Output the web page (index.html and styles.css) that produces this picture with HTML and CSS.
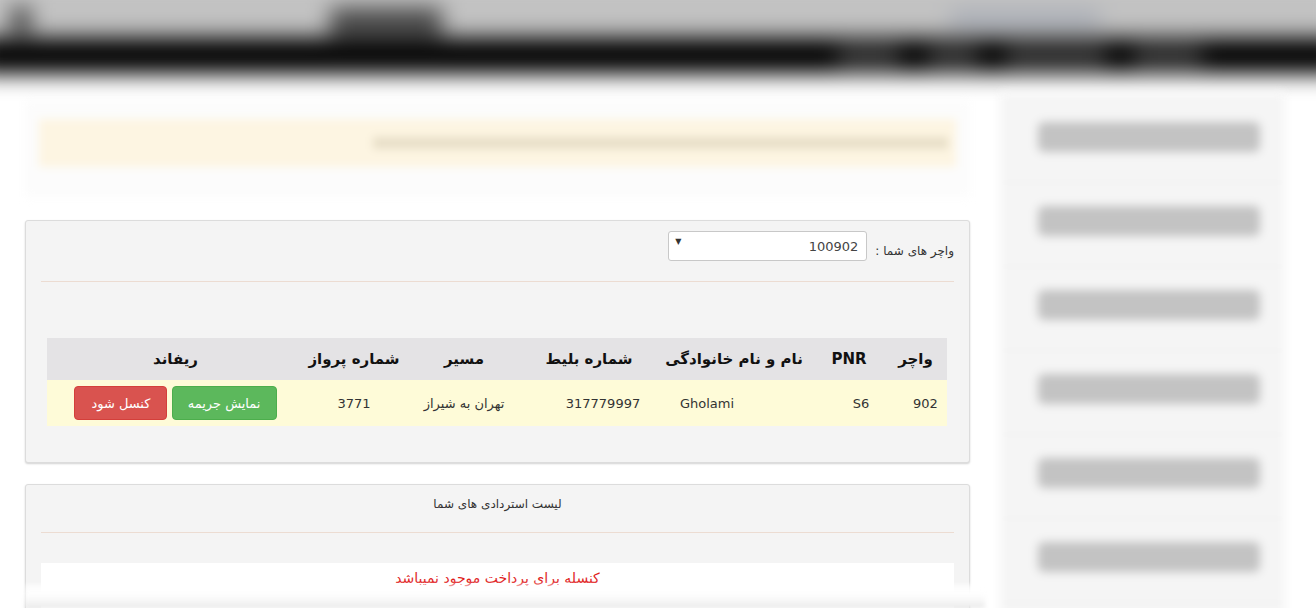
FILE: index.html
```
<!doctype html>
<html lang="fa" dir="rtl">
	<head>
		<meta charset="utf-8">
		<title>واچر های شما</title>
		<link rel="stylesheet" href="styles.css">
	</head>

	<body>
		<div class="masthead">
			<div class="topbar">
				<span class="top-links"></span>
				<span class="logo"></span>
				<span class="menu-icon"></span>
			</div>
			<div class="navbar">
				<span class="nav-item w70"></span>
				<span class="nav-item w100"></span>
				<span class="nav-item w50"></span>
				<span class="nav-item w62"></span>
			</div>
		</div>

		<div class="page">
			<div class="sidebar">
				<div class="side-item"><span class="side-bar"></span></div>
				<div class="side-item"><span class="side-bar"></span></div>
				<div class="side-item"><span class="side-bar"></span></div>
				<div class="side-item"><span class="side-bar"></span></div>
				<div class="side-item"><span class="side-bar"></span></div>
				<div class="side-item"><span class="side-bar"></span></div>
			</div>

			<div class="content">
				<div class="notice-wrap">
					<div class="notice"><span class="notice-text"></span></div>
				</div>

				<div class="panel voucher-panel">
					<div class="voucher-select">
						<label for="voucher">واچر های شما :</label>
						<div class="select-box" id="voucher">
							<span class="select-value">100902</span>
							<span class="select-arrow">▼</span>
						</div>
					</div>
					<hr>
					<div class="table-wrap">
						<table class="ticket-table">
							<thead>
								<tr>
									<th class="c-voucher">واچر</th>
									<th class="c-pnr">PNR</th>
									<th class="c-name">نام و نام خانوادگی</th>
									<th class="c-ticket">شماره بلیط</th>
									<th class="c-route">مسیر</th>
									<th class="c-flight">شماره پرواز</th>
									<th class="c-refund">ریفاند</th>
								</tr>
							</thead>
							<tbody>
								<tr>
									<td class="c-voucher">902</td>
									<td class="c-pnr">S6</td>
									<td class="c-name">Gholami</td>
									<td class="c-ticket">317779997</td>
									<td class="c-route">تهران به شیراز</td>
									<td class="c-flight">3771</td>
									<td class="c-refund">
										<span class="btn btn-green">نمایش جریمه</span>
										<span class="btn btn-red">کنسل شود</span>
									</td>
								</tr>
							</tbody>
						</table>
					</div>
				</div>

				<div class="panel refund-panel">
					<div class="refund-title">لیست استردادی های شما</div>
					<hr>
					<div class="refund-box">
						<span class="refund-empty">کنسله برای پرداخت موجود نمیباشد</span>
					</div>
				</div>
			</div>
		</div>

		<div class="bottom-fade"></div>
	</body>
</html>
```

FILE: styles.css
```
html, body {
	margin: 0;
	padding: 0;
	height: 100%;
	overflow: hidden;
}
body {
	background: #fff;
	color: #333;
	font-family: "DejaVu Sans", sans-serif;
	font-size: 13px;
}

/* header, blurred */
.masthead {
	filter: blur(11px);
	margin-top: -24px;
	margin-left: -24px;
	margin-right: -24px;
}
.topbar {
	height: 62px;
	background: #c2c2c2;
	position: relative;
	direction: ltr;
}
.menu-icon, .logo, .top-links {
	position: absolute;
}
.menu-icon {
	left: 36px;
	top: 32px;
	width: 18px;
	height: 24px;
	background: #333;
}
.logo {
	left: 354px;
	top: 32px;
	width: 112px;
	height: 34px;
	background: #4a4a4a;
}
.top-links {
	left: 974px;
	top: 36px;
	width: 150px;
	height: 14px;
	background: #a2a8b4;
}
.navbar {
	height: 36px;
	background: #000;
	display: flex;
	align-items: center;
	direction: ltr;
	padding-left: 862px;
	gap: 28px;
}
.nav-item {
	height: 20px;
	background: #383838;
}
.w70 { width: 62px; }
.w100 { width: 50px; }
.w50 { width: 100px; }
.w62 { width: 68px; }

/* layout */
.page {
	display: flex;
	gap: 30px;
	padding: 0 31px 0 25px;
	margin-top: 19px;
}
.content {
	width: 945px;
	flex: none;
}
.sidebar {
	width: 285px;
	flex: none;
	background: #f5f5f5;
	filter: blur(5px);
	padding-top: 6px;
	height: 540px;
}
.side-item {
	height: 84px;
	display: flex;
	align-items: flex-start;
	justify-content: center;
	border-bottom: 1px solid #ededed;
	box-sizing: border-box;
}
.side-bar {
	display: block;
	width: 222px;
	height: 30px;
	margin-top: 23px;
	margin-left: 12px;
	background: #c3c3c3;
	border-radius: 6px;
}

/* notice */
.notice-wrap {
	margin-top: 8px;
	height: 96px;
	padding: 18px 14px 0;
	background: #fcfcfc;
	filter: blur(4px);
	box-sizing: border-box;
}
.notice {
	height: 48px;
	background: #fdf5e2;
	display: flex;
	align-items: center;
	padding-right: 8px;
}
.notice-text {
	display: block;
	width: 575px;
	height: 12px;
	background: #e8dfc8;
}

/* panels */
.panel {
	background: #f4f4f4;
	border: 1px solid #dcdcdc;
	border-radius: 3px;
	box-shadow: 0 1px 2px rgba(0, 0, 0, 0.18);
	padding: 10px 15px;
}
.panel hr {
	border: 0;
	border-top: 1px solid #ecdcd2;
	margin: 0;
}
.voucher-panel {
	margin-top: 23px;
	height: 243px;
	box-sizing: border-box;
}
.voucher-select {
	display: flex;
	align-items: center;
	gap: 8px;
	height: 30px;
	margin-bottom: 20px;
}
.voucher-select label {
	font-size: 12px;
	color: #333;
	padding-top: 9px;
}
.select-box {
	width: 199px;
	height: 30px;
	box-sizing: border-box;
	background: #fff;
	border: 1px solid #c8c8c8;
	border-radius: 3px;
	display: flex;
	align-items: center;
	justify-content: space-between;
	padding: 0 8px 0 6px;
}
.select-value {
	font-size: 13px;
	color: #444;
}
.select-arrow {
	font-size: 8px;
	color: #333;
	margin-top: -10px;
}

.table-wrap {
	padding: 56px 7px 0 8px;
}
.ticket-table {
	width: 900px;
	border-collapse: collapse;
	table-layout: fixed;
}
.ticket-table th {
	background: #e4e3e5;
	height: 42px;
	font-size: 15px;
	font-weight: bold;
	color: #111;
	text-align: center;
	padding: 0;
}
.ticket-table td {
	background: #fefbd8;
	height: 46px;
	font-size: 13px;
	color: #333;
	text-align: center;
	padding: 0;
}
.c-voucher { width: 63px; }
.c-pnr { width: 70px; }
.c-name { width: 160px; }
.c-ticket { width: 130px; }
.c-route { width: 120px; }
.c-flight { width: 100px; }
.ticket-table td.c-voucher { padding-left: 20px; }
.ticket-table td.c-pnr { padding-left: 24px; }
.ticket-table td.c-name { padding-right: 54px; }
.ticket-table td.c-ticket { padding-left: 28px; }

.btn {
	display: inline-block;
	height: 34px;
	line-height: 33px;
	box-sizing: border-box;
	border-radius: 4px;
	color: #fff;
	font-size: 13px;
	vertical-align: middle;
}
.btn-green {
	width: 105px;
	background: #5cb85c;
	border: 1px solid #4cae4c;
}
.btn-red {
	width: 93px;
	background: #d9534f;
	border: 1px solid #d43f3a;
}

.refund-panel {
	margin-top: 21px;
	height: 200px;
	box-sizing: border-box;
}
.refund-title {
	text-align: center;
	font-size: 12px;
	color: #333;
	height: 37px;
	line-height: 18px;
}
.refund-box {
	margin-top: 30px;
	background: #fff;
	height: 80px;
	text-align: center;
	padding-top: 7px;
	box-sizing: border-box;
}
.refund-empty {
	color: #e01b1b;
	font-size: 14px;
}

.bottom-fade {
	position: fixed;
	left: 25px;
	bottom: 0;
	width: 960px;
	height: 24px;
	background: linear-gradient(to bottom, rgba(255, 255, 255, 0.6), #fff 40%, #f4f4f4 80%, #e6e6e6);
	filter: blur(2px);
}
```
